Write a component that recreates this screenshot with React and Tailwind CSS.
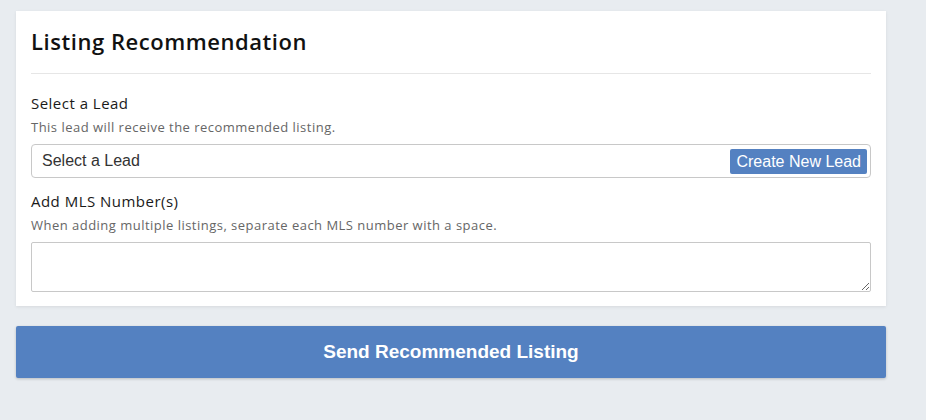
import React from 'react';

const sans = { fontFamily: '"Open Sans", Lato, sans-serif' };
const arial = { fontFamily: '"Liberation Sans", Arial, sans-serif' };

const App = () => {
  return (
    <div className="w-[926px] h-[420px] bg-[#e8ecf0] pt-[11px] pl-[16px]">
      <div className="w-[870px]">
        {/* Card */}
        <div className="bg-white px-[15px] pt-[17px] pb-[14px] shadow-[0_1px_3px_rgba(0,0,0,0.08)] tracking-[0.03em]" style={sans}>
          <h2 className="text-[22px] leading-[26px] font-semibold text-[#111] tracking-[0.025em]">Listing Recommendation</h2>
          <div className="mt-[19px] border-b border-[#e6e6e6]" />

          {/* Lead */}
          <div className="mt-[20px] text-[15px] leading-[18px] text-[#1a1a1a]">Select a Lead</div>
          <div className="mt-[7px] text-[13px] leading-[16px] text-[#666]">This lead will receive the recommended listing.</div>
          <div className="mt-[9px] h-[34px] flex items-center justify-between border border-[#c8c8c8] rounded-[4px] pl-[10px] pr-[3px] tracking-normal" style={arial}>
            <span className="text-[16px] text-[#333]">Select a Lead</span>
            <button className="h-[25px] px-[6px] bg-[#5481c1] text-white text-[16px] leading-[25px] rounded-[2px]">Create New Lead</button>
          </div>

          {/* MLS */}
          <div className="mt-[14px] text-[15px] leading-[18px] text-[#1a1a1a]">Add MLS Number(s)</div>
          <div className="mt-[7px] text-[13px] leading-[16px] text-[#666]">When adding multiple listings, separate each MLS number with a space.</div>
          <textarea className="mt-[9px] block w-full h-[50px] border border-[#c8c8c8] rounded-[2px] outline-none" />
        </div>

        <button
          className="mt-[20px] w-full h-[52px] bg-[#5481c1] text-white text-[19px] font-bold rounded-[2px] shadow-[0_1px_3px_rgba(0,0,0,0.2)]"
          style={arial}
        >
          Send Recommended Listing
        </button>
      </div>
    </div>
  );
};

export default App;
